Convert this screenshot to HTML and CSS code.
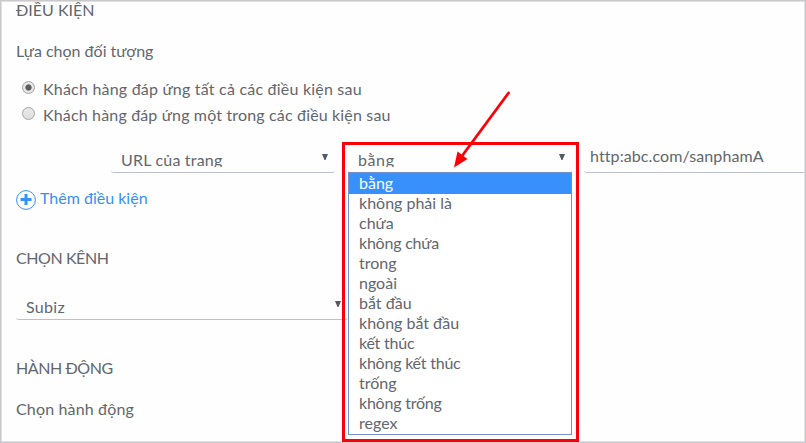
FILE: index.html
```html
<!DOCTYPE html>
<html lang="vi">
<head>
<meta charset="utf-8">
<title>Điều kiện</title>
<link rel="stylesheet" href="styles.css">
</head>
<body>
<main class="page">
  <section class="conditions">
    <h2 class="heading heading-conditions">ĐIỀU KIỆN</h2>
    <p class="label label-target">Lựa chọn đối tượng</p>
    <div class="choices">
      <div class="choice"><i class="radio checked"></i><span>Khách hàng đáp ứng tất cả các điều kiện sau</span></div>
      <div class="choice"><i class="radio"></i><span>Khách hàng đáp ứng một trong các điều kiện sau</span></div>
    </div>
    <div class="rule">
      <div class="field select"><span class="value value-url">URL của trang</span><svg class="caret" viewBox="0 0 6 6"><path d="M0 0h6L3.5 6h-1z"/></svg></div>
      <div class="field select operator"><span class="value value-operator">bằng</span><svg class="caret" viewBox="0 0 6 6"><path d="M0 0h6L3.5 6h-1z"/></svg>
        <ul class="options">
          <li class="active">bằng</li>
          <li>không phải là</li>
          <li>chứa</li>
          <li class="tight">không chứa</li>
          <li>trong</li>
          <li>ngoài</li>
          <li>bắt đầu</li>
          <li>không bắt đầu</li>
          <li class="tight">kết thúc</li>
          <li class="tight">không kết thúc</li>
          <li>trống</li>
          <li class="tight">không trống</li>
          <li>regex</li>
        </ul>
      </div>
      <div class="field input"><span class="input-text">http:abc.com/sanphamA</span></div>
    </div>
    <div class="add">
      <svg class="plus" viewBox="0 0 20 20"><circle cx="10" cy="10" r="9.4"/><path d="M10 4v11M4.5 9.5h11"/></svg>
      <span class="add-text">Thêm điều kiện</span>
    </div>
  </section>
  <section class="channel">
    <h2 class="heading heading-channel">CHỌN KÊNH</h2>
    <div class="field select channel-select"><span class="value value-channel">Subiz</span><svg class="caret" viewBox="0 0 6 6"><path d="M0 0h6L3.5 6h-1z"/></svg></div>
  </section>
  <section class="action">
    <h2 class="heading heading-action">HÀNH ĐỘNG</h2>
    <p class="label label-action">Chọn hành động</p>
  </section>
  <div class="highlight"></div>
  <svg class="arrow" viewBox="0 0 60 80"><path class="shaft" d="M56.500 4L10 67"/><path class="head" d="M2 78.500L5.500 62.500L15.500 70z"/></svg>
  <div class="frame"></div>
</main>
</body>
</html>
```
FILE: styles.css
```css
* { box-sizing: border-box; }
body { margin: 0; background: #fefefe; }
.page {
  position: relative;
  width: 806px;
  height: 443px;
  padding: 0 0 0 16px;
  overflow: hidden;
  font: 16px/20px Lato, "Noto Sans", sans-serif;
  color: #62666d;
}
.heading, .label { margin: 0; font-size: 16px; font-weight: 400; line-height: 20px; }
.heading-channel, .heading-action { letter-spacing: -0.42px; }
.label-target { margin-top: 21px; }
.choices { margin-top: 18px; }
.choice { display: flex; height: 26px; gap: 8px; padding-left: 6px; letter-spacing: 0.21px; }
.choice + .choice { letter-spacing: 0.16px; }
.radio {
  width: 13px;
  height: 13px;
  margin-top: 2px;
  border: 1px solid #a4a4a4;
  border-radius: 50%;
  background: linear-gradient(#e9e9e9, #dedede);
}
.radio.checked { background: radial-gradient(circle, #5b5b5b 0 2.7px, #e6e6e6 3.5px); }
.rule { display: flex; gap: 13px; margin: 16px 0 0 95px; }
.field {
  position: relative;
  flex: none;
  width: 224px;
  height: 26px;
  border-bottom: 1px solid #bcc0d0;
  border-radius: 3px;
  padding-left: 10px;
}
.value { display: block; height: 20px; overflow: hidden; line-height: 26px; }
.value-url { letter-spacing: 0.2px; }
.value-operator { letter-spacing: 0.6px; }
.value-channel { letter-spacing: 0.3px; }
.caret { position: absolute; right: 7px; top: 7px; width: 6px; height: 6px; fill: #555961; }
.input { margin-left: -1px; padding-left: 6px; }
.input-text { position: relative; top: -1px; letter-spacing: 0.1px; }
.add { display: flex; gap: 4px; height: 20px; margin-top: 17px; color: #3590f8; }
.add-text { margin-top: -2px; }
.plus { width: 20px; height: 20px; fill: none; stroke: #3590f8; }
.plus circle { stroke-width: 1; }
.plus path { stroke-width: 3; }
.channel { margin-top: 38px; }
.channel-select { width: 332px; margin-top: 26px; }
.action { margin-top: 38px; }
.label-action { margin-top: 21px; letter-spacing: 0.15px; }
.options {
  position: absolute;
  left: 0;
  top: 25px;
  width: 224px;
  height: 263px;
  margin: 0;
  padding: 0;
  border: 1px solid #7491cc;
  background: #fff;
  list-style: none;
  z-index: 2;
}
.options li { height: 20px; padding-left: 10px; }
.options .tight { letter-spacing: -0.22px; }
.options .active { background: #3790fb; color: #fff; box-shadow: 0 1px #3790fb; }
.highlight { position: absolute; left: 342px; top: 142px; width: 237px; height: 300px; border: 3px solid #fb0007; z-index: 3; }
.arrow { position: absolute; left: 452px; top: 89px; width: 60px; height: 80px; z-index: 4; fill: #fb0007; }
.shaft { stroke: #fb0007; stroke-width: 2.8; stroke-linecap: round; }
.frame { position: absolute; inset: 0; border: 1px solid #c8c8cd; box-shadow: inset 0 0 0 1px #e1e1e4; z-index: 2; }
```
